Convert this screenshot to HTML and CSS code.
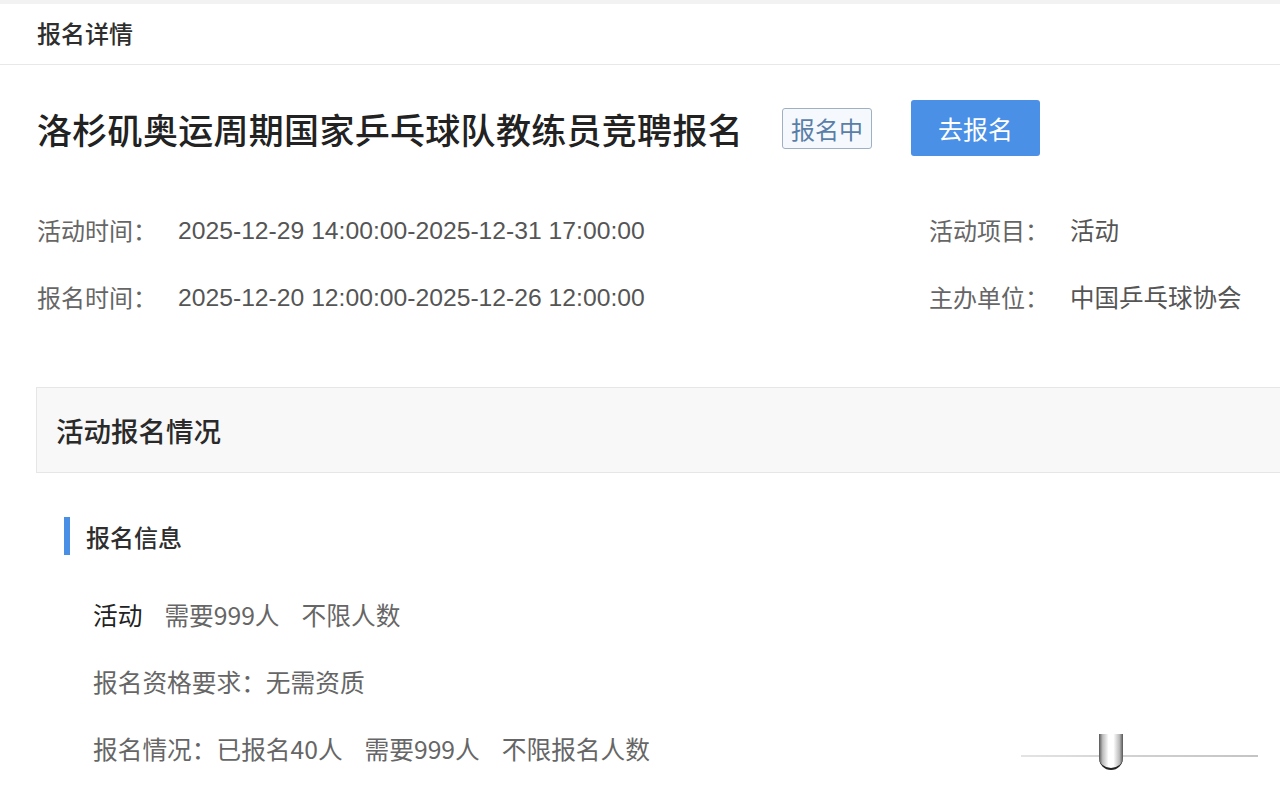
FILE: index.html
```html
<!DOCTYPE html>
<html lang="zh-CN">
<head>
<meta charset="utf-8">
<title>报名详情</title>
<link rel="stylesheet" href="styles.css">
</head>
<body>
<div class="topband"></div>
<header class="header">报名详情</header>
<main class="content">
  <div class="title-row">
    <h1 class="title">洛杉矶奥运周期国家乒乓球队教练员竞聘报名</h1>
    <span class="tag">报名中</span>
    <button class="btn">去报名</button>
  </div>
  <div class="info">
    <div class="info-item"><span class="label">活动时间：</span><span class="value num">2025-12-29 14:00:00-2025-12-31 17:00:00</span></div>
    <div class="info-item"><span class="label">活动项目：</span><span class="value">活动</span></div>
    <div class="info-item"><span class="label">报名时间：</span><span class="value num">2025-12-20 12:00:00-2025-12-26 12:00:00</span></div>
    <div class="info-item"><span class="label">主办单位：</span><span class="value">中国乒乓球协会</span></div>
  </div>
  <div class="section-box">活动报名情况</div>
  <div class="subhead"><span class="bar"></span>报名信息</div>
  <ul class="list">
    <li><span class="dark">活动</span><span class="gap">需要999人</span><span class="gap">不限人数</span></li>
    <li>报名资格要求：无需资质</li>
    <li>报名情况：已报名40人<span class="gap">需要999人</span><span class="gap">不限报名人数</span></li>
  </ul>
</main>
<div class="slider" aria-hidden="true"><span class="track"></span><span class="knob"></span></div>
</body>
</html>
```
FILE: styles.css
```css
html, body {
  margin: 0;
  padding: 0;
  background: #fff;
  overflow: hidden;
}
body {
  width: 1280px;
  height: 792px;
  position: relative;
  font-family: "Noto Sans CJK SC", "Liberation Sans", sans-serif;
  color: #333;
}
.topband {
  height: 4px;
  background: #f2f2f2;
}
.header {
  height: 61px;
  box-sizing: border-box;
  padding: 0 0 4px 37px;
  display: flex;
  align-items: center;
  font-size: 24px;
  font-weight: 500;
  color: #2e2e2e;
  border-bottom: 1px solid #e8e8e8;
}
.content {
  padding-left: 36px;
}
.title-row {
  display: flex;
  align-items: center;
  margin-top: 35px;
  height: 56px;
}
.title {
  margin: 0 39px 0 1px;
  font-size: 35px;
  font-weight: 500;
  color: #222;
  letter-spacing: 0.3px;
}
.tag {
  box-sizing: border-box;
  height: 41px;
  width: 90px;
  display: flex;
  align-items: center;
  justify-content: center;
  border: 1px solid #9fb0c2;
  border-radius: 3px;
  background: #f5f9fd;
  color: #5a7ea8;
  font-size: 24px;
  margin-right: 39px;
}
.btn {
  width: 129px;
  height: 56px;
  border: none;
  border-radius: 3px;
  background: #4a90e6;
  color: #fff;
  font-family: inherit;
  font-size: 25px;
  padding: 0;
}
.info {
  display: grid;
  grid-template-columns: 892px 1fr;
  row-gap: 27px;
  margin-top: 53px;
  padding-left: 1px;
}
.info-item {
  display: flex;
  align-items: center;
  height: 40px;
  font-size: 24px;
}
.label {
  width: 141px;
  color: #666;
}
.value {
  color: #555;
  font-size: 24.5px;
}
.value.num {
  font-family: "Liberation Sans", sans-serif;
  font-size: 24.7px;
  padding-top: 3px;
}
.section-box {
  margin-top: 71px;
  height: 86px;
  box-sizing: border-box;
  background: #f8f8f8;
  border: 1px solid #e6e6e6;
  border-right: none;
  display: flex;
  align-items: center;
  padding-left: 19px;
  font-size: 27.5px;
  font-weight: 500;
  color: #2a2a2a;
}
.subhead {
  display: flex;
  align-items: center;
  margin-top: 44px;
  margin-left: 28px;
  height: 38px;
  font-size: 24px;
  font-weight: 500;
  color: #2e2e2e;
}
.bar {
  width: 6px;
  height: 38px;
  background: #4a8fe6;
  margin-right: 16px;
}
.list {
  list-style: none;
  margin: 39px 0 0 0;
  padding-left: 57px;
  display: flex;
  flex-direction: column;
  row-gap: 27px;
}
.list li {
  height: 40px;
  display: flex;
  align-items: center;
  font-size: 24.7px;
  color: #666;
  white-space: pre;
}
.list .dark {
  color: #222;
}
.gap {
  margin-left: 22px;
}
.slider {
  position: absolute;
  left: 1021px;
  top: 734px;
  width: 237px;
  height: 38px;
}
.track {
  position: absolute;
  left: 0;
  right: 0;
  top: 21px;
  height: 2px;
  background: linear-gradient(90deg, #e4e4e4, #d0d0d0 50%, #c4c4c4);
}
.knob {
  position: absolute;
  left: 78px;
  top: 0;
  width: 24px;
  height: 36px;
  border-radius: 0 0 12px 12px;
  background: linear-gradient(90deg, #555 0, #bbb 15%, #fff 40%, #fff 60%, #bbb 85%, #555 100%);
  border-bottom: 2px solid #222;
  box-sizing: border-box;
}
```
